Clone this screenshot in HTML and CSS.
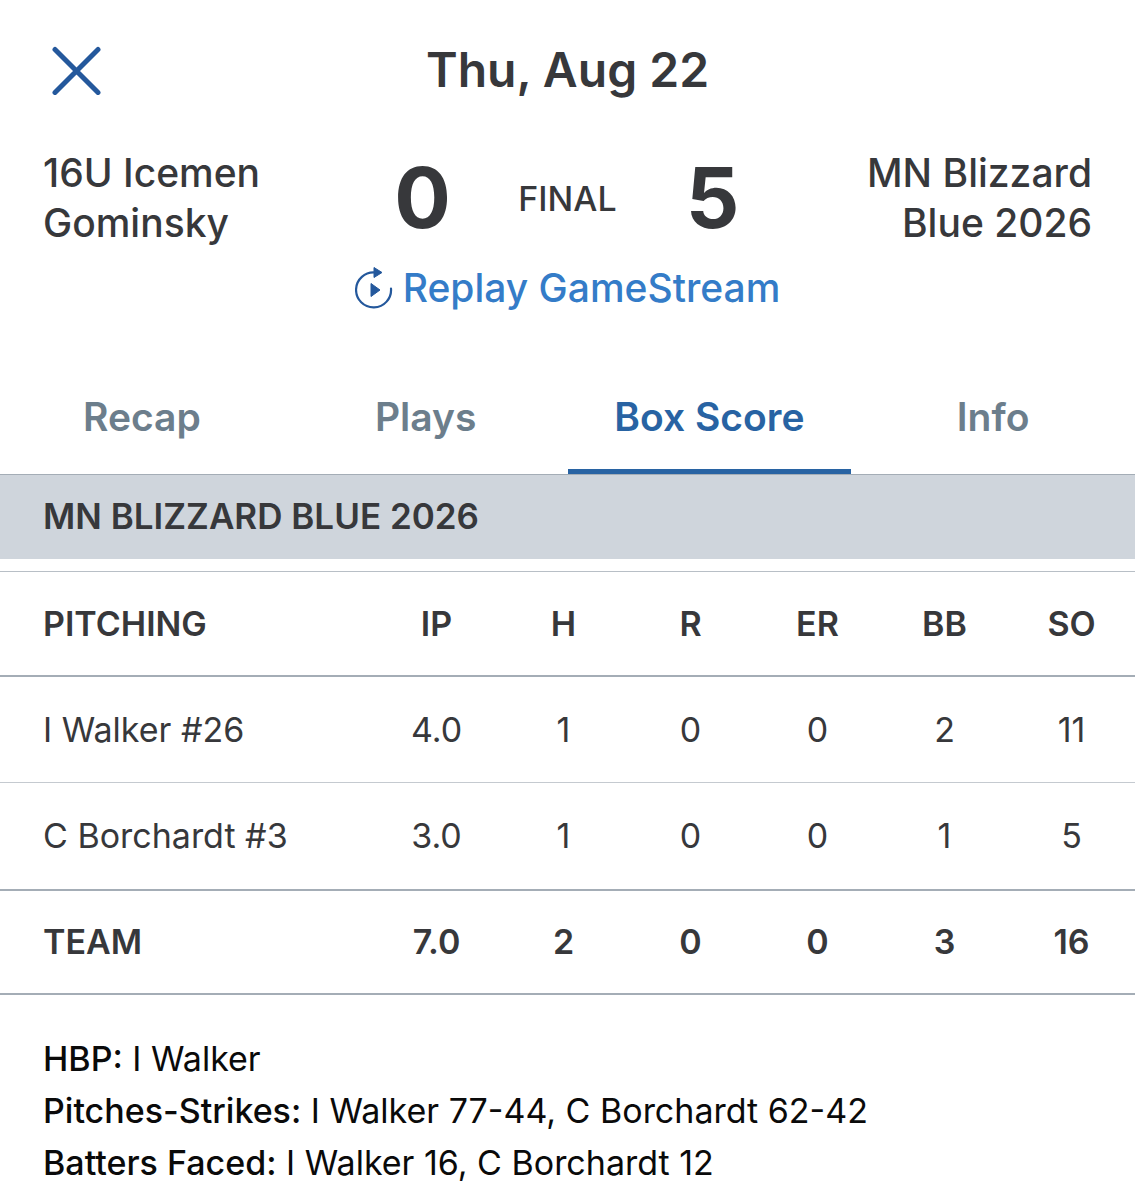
FILE: index.html
```html
<!DOCTYPE html>
<html lang="en">
<head>
    <meta charset="UTF-8">
    <meta name="viewport" content="width=device-width, initial-scale=1.0">
    <title>Box Score</title>
    <link rel="stylesheet" href="styles.css">
</head>
<body>

<header class="header">
    <button type="button" class="close" aria-label="Close">
        <svg viewBox="0 0 50 50" width="50" height="50">
            <path d="M3 4.500L46 47.500M46 4.500L3 47.500" fill="none" stroke="#24589c" stroke-width="5" stroke-linecap="round"/>
        </svg>
    </button>
    <h1>Thu, Aug 22</h1>
</header>

<section class="scoreboard">
    <div class="team">16U Icemen<br>Gominsky</div>
    <div class="score">0</div>
    <div class="status">FINAL</div>
    <div class="score">5</div>
    <div class="team away">MN Blizzard<br>Blue 2026</div>
</section>

<a href="#" class="replay">
    <svg viewBox="0 0 38 44" width="38" height="44">
        <path d="M20 6.500A17.500 17.500 0 1 0 36 22.500" fill="none" stroke="#24589c" stroke-width="2.200" stroke-linecap="round"/>
        <path d="M19 1.500L27 6.500L19 11.500Z" fill="#24589c" stroke="#24589c" stroke-linejoin="round"/>
        <path d="M16 17.500L25 24L16 30.500Z" fill="#24589c" stroke="#24589c" stroke-linejoin="round"/>
    </svg>
    Replay GameStream
</a>

<nav class="tabs">
    <a href="#">Recap</a>
    <a href="#">Plays</a>
    <a href="#" class="active">Box Score</a>
    <a href="#">Info</a>
</nav>

<h2 class="team-title">MN BLIZZARD BLUE 2026</h2>

<table class="stats">
    <thead>
        <tr><th class="name">PITCHING</th><th>IP</th><th>H</th><th>R</th><th>ER</th><th>BB</th><th>SO</th></tr>
    </thead>
    <tbody>
        <tr><td class="name">I Walker #26</td><td>4.0</td><td>1</td><td>0</td><td>0</td><td>2</td><td>11</td></tr>
        <tr><td class="name">C Borchardt #3</td><td>3.0</td><td>1</td><td>0</td><td>0</td><td>1</td><td>5</td></tr>
    </tbody>
    <tfoot>
        <tr><td class="name">TEAM</td><td>7.0</td><td>2</td><td>0</td><td>0</td><td>3</td><td>16</td></tr>
    </tfoot>
</table>

<div class="notes">
    <p><b>HBP:</b> I Walker</p>
    <p><b>Pitches-Strikes:</b> I Walker 77-44, C Borchardt 62-42</p>
    <p><b>Batters Faced:</b> I Walker 16, C Borchardt 12</p>
</div>

</body>
</html>
```

FILE: styles.css
```css
* {
    box-sizing: border-box;
}
body {
    margin: 0;
    font-family: Inter, "Liberation Sans", sans-serif;
    background-color: #fff;
    color: #37383b;
}
.header {
    display: grid;
    grid-template-columns: 1fr auto 1fr;
    align-items: center;
    padding: 40px 52px 0;
}
.header h1 {
    margin: 0;
    font-size: 48px;
    line-height: 60px;
    font-weight: 600;
}
.close {
    display: flex;
    justify-self: start;
    padding: 0;
    border: none;
    background: none;
    cursor: pointer;
}
.scoreboard {
    display: grid;
    grid-template-columns: 1fr 102px 188px 102px 1fr;
    align-items: center;
    padding: 48px 43px 0;
}
.team {
    font-size: 39px;
    line-height: 50px;
    font-weight: 500;
}
.away {
    text-align: right;
}
.score {
    font-size: 84px;
    line-height: 96px;
    font-weight: 700;
    text-align: center;
}
.status {
    font-size: 34px;
    font-weight: 500;
    text-align: center;
}
.replay {
    display: flex;
    justify-content: center;
    align-items: center;
    gap: 10px;
    margin-top: 18px;
    font-size: 39px;
    line-height: 44px;
    font-weight: 500;
    color: #347cc8;
    text-decoration: none;
}
.tabs {
    display: flex;
    margin-top: 50px;
    border-bottom: 1px solid #a4adb6;
}
.tabs a {
    flex: 1;
    height: 114px;
    padding-top: 32px;
    border-bottom: 5px solid transparent;
    font-size: 39px;
    line-height: 50px;
    font-weight: 600;
    text-align: center;
    color: #6c7e8c;
    text-decoration: none;
}
.tabs .active {
    color: #2863a3;
    border-bottom-color: #2863a3;
}
.team-title {
    margin: 0 0 12px;
    padding: 0 43px 2px;
    background-color: #cfd5dc;
    font-size: 35px;
    line-height: 82px;
    font-weight: 600;
}
.stats {
    width: 100%;
    table-layout: fixed;
    border-collapse: collapse;
    border-top: 1px solid #b8bfc6;
    font-size: 34px;
}
.stats th,
.stats td {
    width: 127px;
    height: 107px;
    padding: 0;
    font-weight: 400;
    text-align: center;
    border-bottom: 1px solid #c5cad0;
}
.stats .name {
    width: auto;
    padding-left: 43px;
    text-align: left;
}
.stats th,
.stats tfoot td {
    height: 104px;
    font-weight: 600;
}
.stats th,
.stats tbody tr:last-child td,
.stats tfoot td {
    border-bottom: 2px solid #a4adb6;
}
.notes {
    padding: 38px 43px 0;
    font-size: 34px;
    line-height: 52px;
    color: #0a0a0a;
}
.notes p {
    margin: 0;
}
.notes b {
    font-weight: 500;
}
```
